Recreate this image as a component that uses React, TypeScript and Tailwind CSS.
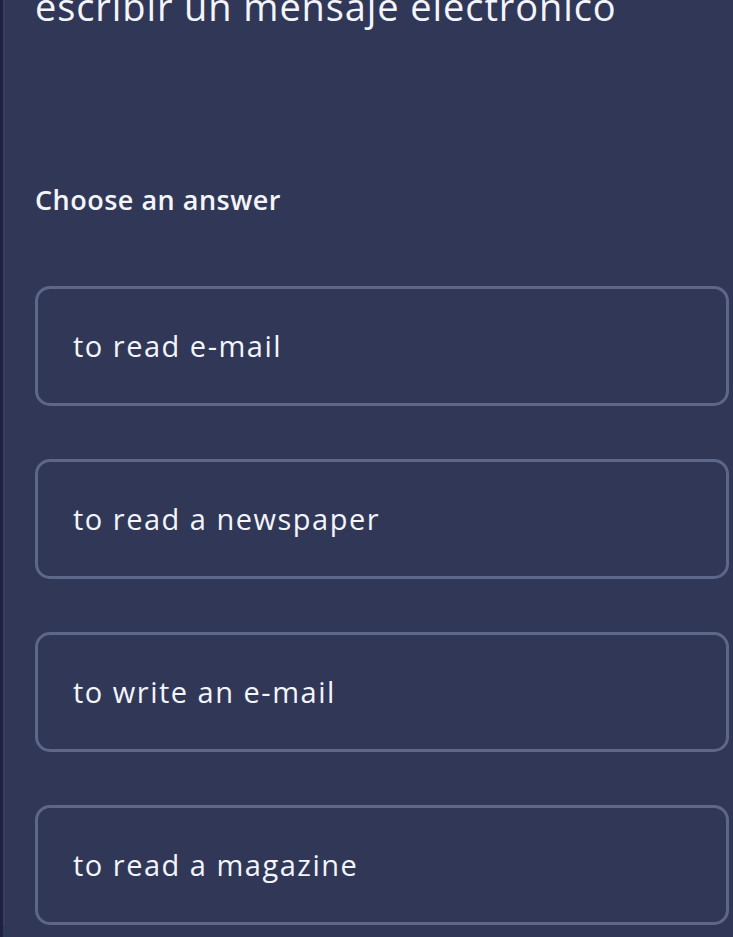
import React from "react";

const answers = ["to read e-mail", "to read a newspaper", "to write an e-mail", "to read a magazine"];

const App: React.FC = () => {
  return (
    <div
      className="min-h-screen w-full overflow-hidden bg-[#313857] border-l-[3px] border-[#1e2142] text-[#f3f5fb]"
      style={{ fontFamily: "'Open Sans', Lato, sans-serif" }}
    >
      <div className="shadow-[inset_2px_0_0_#3a3b5e] min-h-screen pl-[32px] pr-[4px]">
        <h1 className="-mt-[19px] text-[38px] leading-[50px] font-normal tracking-[0.9px] whitespace-nowrap">
          escribir un mensaje electronico
        </h1>

        <p className="mt-[151px] text-[27px] leading-[36px] font-semibold tracking-[0.5px]">Choose an answer</p>

        <div className="mt-[68px] flex flex-col gap-[53px]">
          {answers.map((a) => (
            <button
              key={a}
              className="h-[120px] w-full rounded-[15px] border-[3px] border-[#5c6789] bg-[#313857] pl-[35px] text-left text-[29px] leading-[34px] tracking-[1.5px] text-[#f3f5fb]"
            >
              {a}
            </button>
          ))}
        </div>
      </div>
    </div>
  );
};

export default App;
